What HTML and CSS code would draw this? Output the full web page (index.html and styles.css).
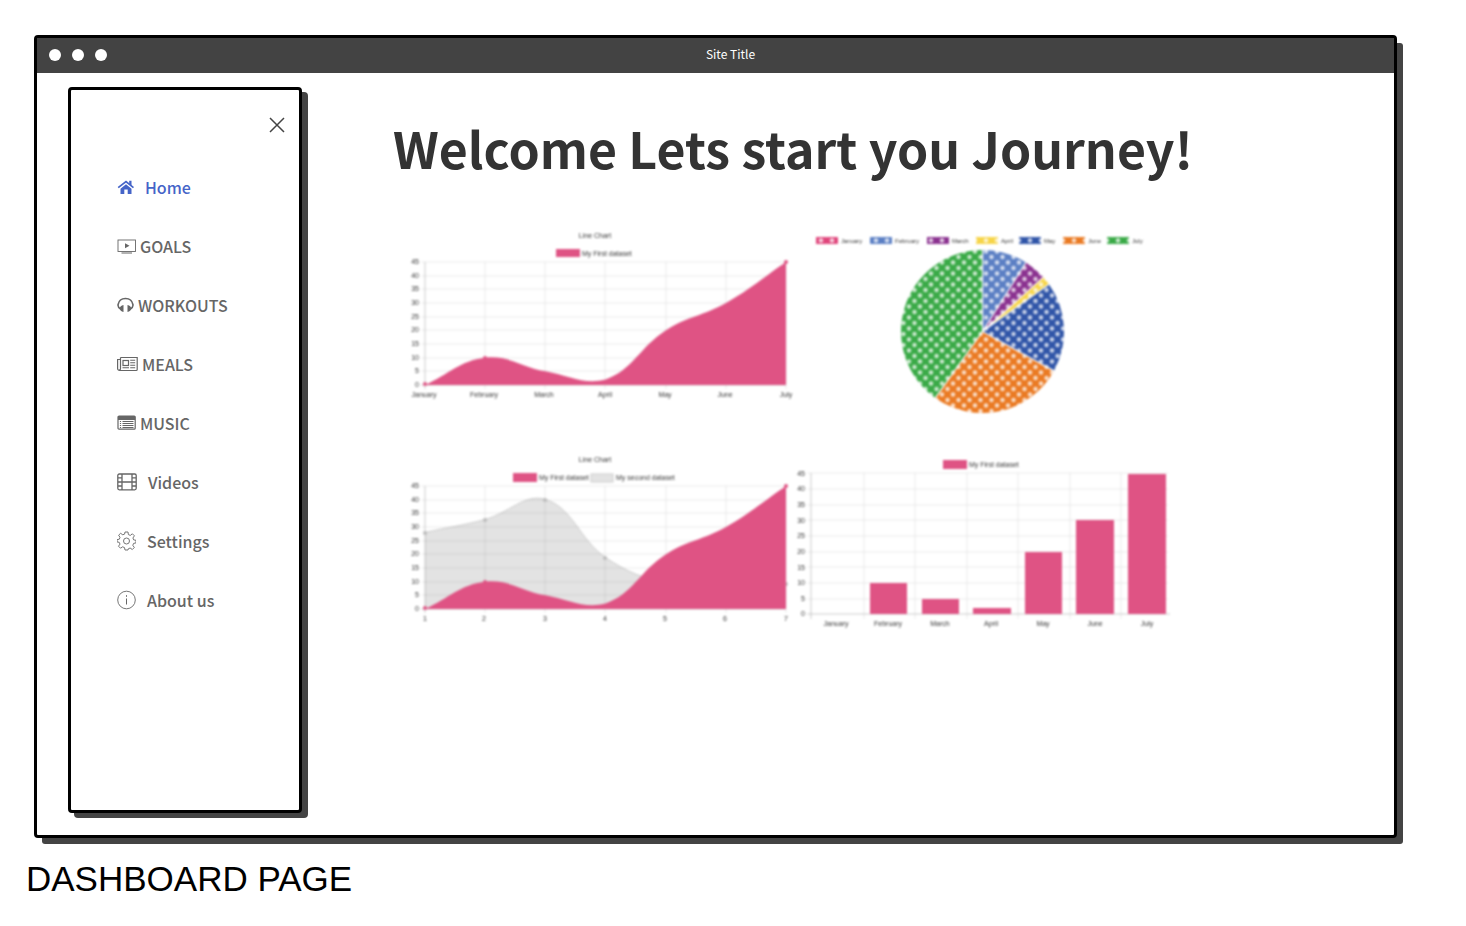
FILE: index.html
```html
<!DOCTYPE html>
<html lang="en">
<head>
<meta charset="utf-8">
<title>Dashboard page</title>
<link rel="stylesheet" href="styles.css">
</head>
<body>
<div class="window">
  <header class="titlebar">
    <div class="dots"><span></span><span></span><span></span></div>
    <p class="site-title">Site Title</p>
  </header>
  <div class="content">
    <aside class="sidebar">
      <button class="close" type="button" aria-label="Close menu">
        <svg width="16" height="16" viewBox="0 0 16 16"><path d="M1 1l14 14M15 1L1 15" fill="none" stroke="currentColor" stroke-width="1.5"/></svg>
      </button>
      <nav class="nav">
        <a class="wide active" href="#home">
          <svg width="17" height="16" viewBox="0 0 17 16"><path d="M9 5.200L14.500 9.700V15H10.700V10.500H7.300V15H3.500V9.700Z" fill="currentColor"/><path d="M1.200 8.700L9 2.500L16.500 8.700" fill="none" stroke="currentColor" stroke-width="1.700"/><path d="M12.200 1.700h2.300v5l-2.300-2z" fill="currentColor"/></svg>
          <span>Home</span></a>
        <a href="#goals">
          <svg width="19" height="16" viewBox="0 0 19 16"><rect x="1" y="2" width="17.500" height="11.500" fill="none" stroke="currentColor" stroke-width=".9"/><path d="M8 5.300v5l4.500-2.500z" fill="currentColor"/><path d="M4.500 15h10.500" stroke="currentColor"/></svg>
          <span>GOALS</span></a>
        <a href="#workouts">
          <svg width="17" height="16" viewBox="0 0 17 16"><path d="M3.600 12C1 10.500.9 8.500 1.100 7.500C1.800 3.800 4.700 1.500 8.500 1.500S15.200 3.800 15.900 7.500C16.100 8.500 16 10.500 13.400 12" fill="none" stroke="currentColor" stroke-width="1.600"/><path d="M6.500 8v7C4.200 14.600 3 13.300 2.700 11.500C3 9.700 4.200 8.300 6.500 8ZM10.500 8v7c2.300-.4 3.500-1.700 3.800-3.500C14 9.700 12.800 8.300 10.500 8Z" fill="currentColor"/></svg>
          <span>WORKOUTS</span></a>
        <a href="#meals">
          <svg width="21" height="16" viewBox="0 0 21 16"><path d="M3.500 1.500h16.700v12a1 1 0 0 1-1 1H2.500a1.900 1.900 0 0 1-1.900-1.900V3.500H3.500M3.500 1.500v11.300a1.100 1.100 0 0 1-1.500 1.100" fill="none" stroke="currentColor" stroke-width="1.200"/><rect x="6" y="4.500" width="5.500" height="5" fill="none" stroke="currentColor" stroke-width="1.200"/><path d="M13.200 4.300h5M13.200 6.800h5M13.200 9.300h5M5.500 11.800h6.500M13.200 11.800h5" stroke="currentColor" stroke-width="1.100"/></svg>
          <span>MEALS</span></a>
        <a href="#music">
          <svg width="19" height="16" viewBox="0 0 19 16"><rect x="1" y="1.200" width="17.200" height="13" rx="1" fill="none" stroke="currentColor" stroke-width="1.200"/><path d="M1 1h17.200v4H1z" fill="currentColor"/><path d="M5.500 6.500h11M5.500 8.500h11M5.500 10.500h11M5.500 12.500h11M2.900 6.500h1.200M2.900 8.500h1.200M2.900 10.500h1.200M2.900 12.500h1.200" stroke="currentColor"/></svg>
          <span>MUSIC</span></a>
        <a class="wide" href="#videos">
          <svg width="20" height="18" viewBox="0 0 20 18"><rect x=".8" y="1" width="18.400" height="15.800" rx="1.500" fill="none" stroke="currentColor" stroke-width="1.300"/><path d="M5 1v16M15 1v16M5 9h10M1 4.800h4M1 9h4M1 13h4M15 4.800h4M15 9h4M15 13h4" fill="none" stroke="currentColor" stroke-width="1.300"/></svg>
          <span>Videos</span></a>
        <a class="wide" href="#settings">
          <svg width="19" height="20" viewBox="0 0 19 20"><path d="M8 1h3l.4 2.600 1.900.8 2.100-1.600 2 2-1.500 2.200.8 1.900 2.300.4v2.600l-2.400.5-.8 1.900 1.500 2.200-2 2-2.200-1.500-1.800.8L11 19H8l-.5-2.400-1.900-.8-2.100 1.400-2-2L3 13.100l-.8-1.800L0 10.900V8.700l2.300-.5L3 6.300 1.600 4.200l2-1.900 2.200 1.500 1.800-.7Z" fill="none" stroke="currentColor" stroke-width=".9"/><circle cx="9.500" cy="10" r="3" fill="none" stroke="currentColor" stroke-width=".9"/></svg>
          <span>Settings</span></a>
        <a class="wide" href="#about">
          <svg width="19" height="20" viewBox="0 0 19 20"><circle cx="9.500" cy="10" r="8.800" fill="none" stroke="currentColor" stroke-width=".9"/><path d="M9.500 8.500v6M9.500 5.200v1.600" stroke="currentColor"/></svg>
          <span>About us</span></a>
      </nav>
    </aside>
    <main class="main">
      <h1>Welcome Lets start you Journey!</h1>
      <div class="charts">
        <svg class="chart" viewBox="0 0 388 192" role="img" aria-label="Line chart">
          <defs>
            <pattern id="mesh" width="11" height="11" patternUnits="userSpaceOnUse"><circle cx="3" cy="1.500" r="2.200" fill="#fff" fill-opacity=".75"/><circle cx="3" cy="12.500" r="2.200" fill="#fff" fill-opacity=".75"/><circle cx="8.500" cy="7" r="2.200" fill="#fff" fill-opacity=".75"/></pattern>
            <path id="pink-area" d="M17 157C41 146 52.500 132.500 77 129.700C100.500 127 113 139 137.500 143.300C161.500 148 176.500 157 197.500 151.500C224.500 142.300 232 118.800 258 102.300C280 88 295 88 318 75C343 60.700 354 50.400 378 34V157Z"/>
            <g id="line-grid">
              <path class="grid" d="M13 34H378M13 48H378M13 61H378M13 75H378M13 89H378M13 102H378M13 116H378M13 130H378M13 143H378M77 34V161M137 34V161M197 34V161M258 34V161M318 34V161M378 34V161"/>
              <path class="axis" d="M17 34V161M13 157H378"/>
              <g class="ticks"><text x="11" y="36">45</text><text x="11" y="50">40</text><text x="11" y="63">35</text><text x="11" y="77">30</text><text x="11" y="91">25</text><text x="11" y="104">20</text><text x="11" y="118">15</text><text x="11" y="132">10</text><text x="11" y="145">5</text><text x="11" y="159">0</text></g>
            </g>
          </defs>
          <text class="label" x="187" y="10">Line Chart</text>
          <rect class="pink" x="148" y="21" width="24" height="8"/><text class="label start" x="174" y="28">My First dataset</text>
          <use href="#line-grid"/>
          <use href="#pink-area" class="pink"/>
          <g class="pink"><circle cx="17" cy="156" r="2"/><circle cx="77" cy="130" r="2"/><circle cx="378" cy="34" r="2"/></g>
          <g class="label"><text x="16" y="169">January</text><text x="76" y="169">February</text><text x="136" y="169">March</text><text x="197" y="169">April</text><text x="257" y="169">May</text><text x="317" y="169">June</text><text x="378" y="169">July</text></g>
        </svg>

        <svg class="chart" viewBox="0 0 380 192" role="img" aria-label="Pie chart">
          <rect x="20" y="9" width="22" height="7" fill="#e0457b"/><rect x="74" y="9" width="22" height="7" fill="#5b7fc4"/><rect x="131" y="9" width="22" height="7" fill="#8b3290"/><rect x="180" y="9" width="22" height="7" fill="#f7d548"/><rect x="223" y="9" width="22" height="7" fill="#3055a8"/><rect x="267" y="9" width="22" height="7" fill="#ea7a23"/><rect x="311" y="9" width="22" height="7" fill="#3aaa47"/>
          <path fill="url(#mesh)" d="M20 9h22v7h-22zM74 9h22v7h-22zM131 9h22v7h-22zM180 9h22v7h-22zM223 9h22v7h-22zM267 9h22v7h-22zM311 9h22v7h-22z"/>
          <g class="label small"><text x="45" y="15">January</text><text x="99" y="15">February</text><text x="156" y="15">March</text><text x="205" y="15">April</text><text x="248" y="15">May</text><text x="292" y="15">June</text><text x="336" y="15">July</text></g>
          <path fill="#5b7fc4" d="M186.500 103.500V22A81.500 81.500 0 0 1 229.900 34.500Z"/>
          <path fill="#8b3290" d="M186.500 103.500L229.900 34.500A81.500 81.500 0 0 1 247.300 49.200Z"/>
          <path fill="#f7d548" d="M186.500 103.500L247.300 49.200A81.500 81.500 0 0 1 252.900 56.300Z"/>
          <path fill="#3055a8" d="M186.500 103.500L252.900 56.300A81.500 81.500 0 0 1 257.900 142.900Z"/>
          <path fill="#ea7a23" d="M186.500 103.500L257.900 142.900A81.500 81.500 0 0 1 139.300 169.900Z"/>
          <path fill="#3aaa47" d="M186.500 103.500L139.300 169.900A81.500 81.500 0 0 1 186.500 22Z"/>
          <circle cx="186.500" cy="103.500" r="82" fill="url(#mesh)"/>
          <path d="M186.500 103.500V22M186.500 103.500L229.900 34.500M186.500 103.500L247.300 49.200M186.500 103.500L252.900 56.300M186.500 103.500L257.900 142.900M186.500 103.500L139.300 169.900" stroke="#fff" stroke-width="1.200"/>
        </svg>

        <svg class="chart" viewBox="0 0 388 192" role="img" aria-label="Line chart with two datasets">
          <text class="label" x="187" y="10">Line Chart</text>
          <rect class="pink" x="105" y="21" width="24" height="9"/><text class="label start" x="131" y="28">My First dataset</text>
          <rect x="183" y="22" width="22" height="8" fill="#e3e3e3" stroke="#ccc"/><text class="label start" x="208" y="28">My second dataset</text>
          <path d="M17 80.500C41 75 53 74 77 67.500C101 61 117 41 137.500 47.500C165 56 171 87 197.500 105.500C219 120 236 127 258 130L378 132V157H17Z" fill="#e3e3e3"/>
          <path d="M17 80.500C41 75 53 74 77 67.500C101 61 117 41 137.500 47.500C165 56 171 87 197.500 105.500C219 120 236 127 258 130" fill="none" stroke="#ccc"/>
          <use href="#line-grid"/>
          <g fill="#bbb"><circle cx="17" cy="81" r="2"/><circle cx="77" cy="68" r="2"/><circle cx="137" cy="48" r="2"/><circle cx="197" cy="106" r="2"/><circle cx="378" cy="132" r="2"/></g>
          <use href="#pink-area" class="pink"/>
          <g class="pink"><circle cx="17" cy="156" r="2"/><circle cx="77" cy="130" r="2"/><circle cx="378" cy="34" r="2"/></g>
          <g class="label"><text x="17" y="169">1</text><text x="76" y="169">2</text><text x="137" y="169">3</text><text x="197" y="169">4</text><text x="257" y="169">5</text><text x="317" y="169">6</text><text x="378" y="169">7</text></g>
        </svg>

        <svg class="chart" viewBox="0 0 380 192" role="img" aria-label="Bar chart">
          <rect class="pink" x="147" y="8" width="24" height="9"/><text class="label start" x="173" y="15">My First dataset</text>
          <path class="grid" d="M11 21H372M11 37H372M11 53H372M11 68H372M11 84H372M11 100H372M11 115H372M11 131H372M11 147H372M68 21V167M119 21V167M171 21V167M222 21V167M274 21V167M325 21V167"/>
          <path class="axis" d="M15 21V167M11 162H374"/>
          <path class="pink" d="M74 131h37v31h-37zM126 147h37v15h-37zM177 156h38v6h-38zM229 100h37v62h-37zM280 68h38v94h-38zM332 22h38v140h-38z"/>
          <g class="ticks"><text x="9" y="24">45</text><text x="9" y="39">40</text><text x="9" y="55">35</text><text x="9" y="71">30</text><text x="9" y="86">25</text><text x="9" y="102">20</text><text x="9" y="118">15</text><text x="9" y="133">10</text><text x="9" y="149">5</text><text x="9" y="164">0</text></g>
          <g class="label"><text x="40" y="174">January</text><text x="92" y="174">February</text><text x="144" y="174">March</text><text x="195" y="174">April</text><text x="247" y="174">May</text><text x="299" y="174">June</text><text x="351" y="174">July</text></g>
        </svg>
      </div>
    </main>
  </div>
</div>
<p class="caption">DASHBOARD PAGE</p>
</body>
</html>
```
FILE: styles.css
```css
* { box-sizing: border-box; }

body {
  margin: 0;
  padding: 35px 69px 0 34px;
  background: #fff;
  color: #333;
  font-family: "Noto Sans CJK SC", "Noto Sans", sans-serif;
}

.window {
  border: 3px solid #000;
  border-radius: 4px;
  background: #fff;
  box-shadow: 7px 7px 0 -1px #444;
}

.titlebar {
  display: grid;
  grid-template-columns: 1fr auto 1fr;
  align-items: center;
  padding: 5px 12px 8px;
  background: #434343;
  color: #fff;
}

.dots { display: flex; gap: 11px; padding-top: 2px; }
.dots span { width: 12px; height: 12px; border-radius: 50%; background: #fff; }

.site-title { margin: 0 0 0 30px; font-size: 12px; line-height: 22px; }

.content { display: flex; align-items: flex-start; padding: 14px 0 22px 31px; }

.sidebar {
  flex: none;
  width: 234px;
  min-height: 726px;
  padding: 25px 12px 0 46px;
  border: 3px solid #000;
  border-radius: 4px;
  background: #fff;
  box-shadow: 6px 5px 0 #444;
}

.close {
  display: block;
  margin-left: auto;
  padding: 2px;
  border: 0;
  background: none;
  color: #444;
  cursor: pointer;
}
.close svg { display: block; }

.nav { display: flex; flex-direction: column; gap: 35px; margin-top: 40px; }
.nav a {
  display: flex;
  align-items: center;
  gap: 4px;
  color: #666;
  font-size: 16px;
  font-weight: 500;
  line-height: 24px;
  text-decoration: none;
}
.nav .wide { gap: 11px; }
.nav .active { color: #4564c8; }
.nav svg { flex: none; }

.main { flex: 1; min-width: 0; padding: 24px 0 0 91px; }

h1 { margin: 0; font-size: 50px; font-weight: 700; line-height: 72px; }

.charts {
  display: grid;
  grid-template-columns: 388fr 380fr;
  row-gap: 32px;
  margin: 45px 218px 0 15px;
}
.chart {
  display: block;
  width: 100%;
  height: auto;
  overflow: visible;
  filter: blur(1px);
}

.pink { fill: #df5384; }
.grid { fill: none; stroke: #000; stroke-opacity: .08; }
.axis { fill: none; stroke: #000; stroke-opacity: .2; }
.label, .ticks { fill: #333; font-family: "Liberation Sans", Arial, sans-serif; font-size: 7px; }
.label { text-anchor: middle; }
.ticks { text-anchor: end; }
.start, .small { text-anchor: start; }
.small { font-size: 6px; }

.caption {
  margin: 17px 0 0 -8px;
  color: #000;
  font-family: "Liberation Sans", Arial, sans-serif;
  font-size: 35px;
  line-height: 48px;
}
```
